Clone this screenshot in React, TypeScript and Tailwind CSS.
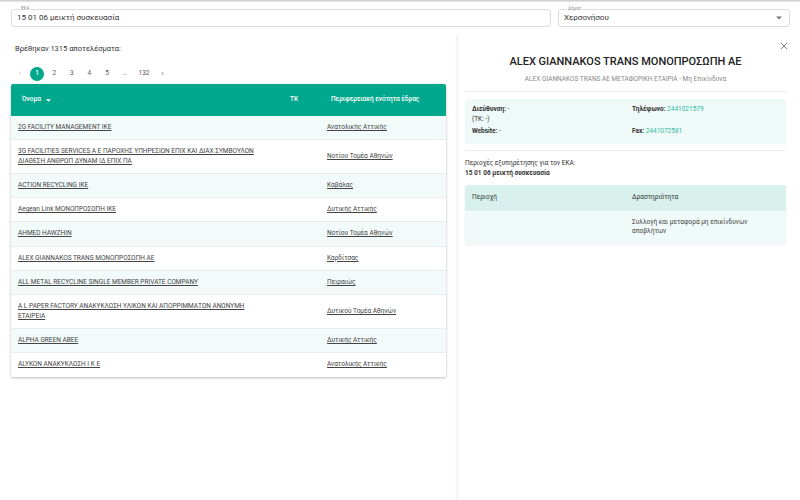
import React from "react";

const rows: { name: string; region: string }[] = [
  { name: "2G FACILITY MANAGEMENT IKE", region: "Ανατολικής Αττικής" },
  {
    name: "3G FACILITIES SERVICES Α Ε ΠΑΡΟΧΗΣ ΥΠΗΡΕΣΙΩΝ ΕΠΙΧ ΚΑΙ ΔΙΑΧ ΣΥΜΒΟΥΛΩΝ ΔΙΑΘΕΣΗ ΑΝΘΡΩΠ ΔΥΝΑΜ ΙΔ ΕΠΙΧ ΠΑ",
    region: "Νοτίου Τομέα Αθηνών",
  },
  { name: "ACTION RECYCLING IKE", region: "Καβάλας" },
  { name: "Aegean Link ΜΟΝΟΠΡΟΣΩΠΗ ΙΚΕ", region: "Δυτικής Αττικής" },
  { name: "AHMED HAWZHIN", region: "Νοτίου Τομέα Αθηνών" },
  { name: "ALEX GIANNAKOS TRANS ΜΟΝΟΠΡΟΣΩΠΗ ΑΕ", region: "Καρδίτσας" },
  { name: "ALL METAL RECYCLINE SINGLE MEMBER PRIVATE COMPANY", region: "Πειραιώς" },
  {
    name: "A L PAPER FACTORY ΑΝΑΚΥΚΛΩΣΗ ΥΛΙΚΩΝ ΚΑΙ ΑΠΟΡΡΙΜΜΑΤΩΝ ΑΝΩΝΥΜΗ ΕΤΑΙΡΕΙΑ",
    region: "Δυτικού Τομέα Αθηνών",
  },
  { name: "ALPHA GREEN ABEE", region: "Δυτικής Αττικής" },
  { name: "ALYKON ΑΝΑΚΥΚΛΩΣΗ Ι Κ Ε", region: "Ανατολικής Αττικής" },
];

export default function App() {
  return (
    <div
      className="w-[800px] h-[500px] bg-white flex flex-col overflow-hidden text-[#333]"
      style={{ fontFamily: "Roboto, 'Noto Sans', sans-serif" }}
    >
      <div className="h-[2px] bg-gradient-to-b from-[#c8c8c8] to-[#ececec]" />
      {/* top inputs */}
      <div className="flex gap-[7px] pl-[11px] pr-[10px] pt-[7px]">
        <div className="relative flex-1 h-[18px] border border-[#dcdcdc] rounded-[3px] flex items-center pl-[5px]">
          <span className="absolute left-[8px] top-[-4px] bg-white px-[1px] text-[4.5px] leading-[6px] text-[#8a8a8a]">
            ΕΚΑ
          </span>
          <span className="text-[8px] text-[#333]">15 01 06 μεικτή συσκευασία</span>
        </div>
        <div className="relative w-[232px] h-[18px] border border-[#dcdcdc] rounded-[3px] flex items-center pl-[5px] pr-[7px]">
          <span className="absolute left-[8px] top-[-4px] bg-white px-[1px] text-[4.5px] leading-[6px] text-[#8a8a8a]">
            Δήμος
          </span>
          <span className="text-[8px] text-[#333] flex-1">Χερσονήσου</span>
          <svg width="6" height="4" viewBox="0 0 10 5">
            <path d="M0 0 L5 5 L10 0 Z" fill="#777" />
          </svg>
        </div>
      </div>

      <div className="flex flex-1 min-h-0">
        {/* left column */}
        <div className="w-[457px] shrink-0 pl-[11px] pr-[11px]">
          <div className="pl-[4px] pt-[17px] text-[7.5px] leading-[10px] text-[#333]">
            Βρέθηκαν 1315 αποτελέσματα:
          </div>
          <div className="flex items-center h-[14px] mt-[13px] pl-[5px] text-[6.5px] text-[#555]">
            <span className="w-[8px] text-[#bbb] text-[7px] text-center">‹</span>
            <span className="ml-[6px] w-[14px] h-[14px] rounded-full bg-[#00a78d] text-white flex items-center justify-center font-medium">
              1
            </span>
            <span className="w-[17.5px] ml-[1.5px] text-center">2</span>
            <span className="w-[17.5px] text-center">3</span>
            <span className="w-[17.5px] text-center">4</span>
            <span className="w-[18px] text-center">5</span>
            <span className="w-[18px] text-center text-[#888]">…</span>
            <span className="w-[20px] text-center">132</span>
            <span className="w-[17px] text-center text-[8px]">›</span>
          </div>
          <div className="mt-[3px] rounded-[2px] shadow-[0_1px_3px_rgba(0,0,0,0.28)] overflow-hidden">
            <table className="w-full table-fixed border-collapse">
              <colgroup>
                <col className="w-[272px]" />
                <col className="w-[37px]" />
                <col />
              </colgroup>
              <thead>
                <tr className="bg-[#00a78d] h-[32px] text-white text-[6.5px] font-medium">
                  <th className="text-left pl-[11px] font-medium">
                    <span className="inline-flex items-center gap-[5px]">
                      Όνομα
                      <svg width="5" height="3" viewBox="0 0 10 5">
                        <path d="M0 0 L5 5 L10 0 Z" fill="#fff" />
                      </svg>
                    </span>
                  </th>
                  <th className="text-left pl-[7px] font-medium">ΤΚ</th>
                  <th className="text-left pl-[11px] font-medium">Περιφερειακή ενότητα έδρας</th>
                </tr>
              </thead>
              <tbody>
                {rows.map((r, i) => (
                  <tr
                    key={i}
                    className={`${i % 2 === 0 ? "bg-[#f3fbfa]" : "bg-white"} border-b border-[#ececec] last:border-b-0 text-[6.5px] leading-[9.3px] text-[#444]`}
                  >
                    <td className="pl-[7px] pr-[20px] py-[7px] align-middle">
                      <span className="underline underline-offset-[1px]">{r.name}</span>
                    </td>
                    <td />
                    <td className="pl-[7px] align-middle">
                      <span className="underline underline-offset-[1px]">{r.region}</span>
                    </td>
                  </tr>
                ))}
              </tbody>
            </table>
          </div>
        </div>

        {/* right panel */}
        <div className="flex-1 mt-[8px] border-l border-[#ededed] shadow-[-1px_0_2px_rgba(0,0,0,0.03)] pl-[7px] pr-[14px] relative">
          <svg
            className="absolute right-[12px] top-[7px]"
            width="8"
            height="8"
            viewBox="0 0 10 10"
          >
            <path d="M1 1 L9 9 M9 1 L1 9" stroke="#777" strokeWidth="1.2" />
          </svg>
          <div className="text-center pt-[20px] text-[11px] leading-[14px] font-medium text-[#222]">
            ALEX GIANNAKOS TRANS ΜΟΝΟΠΡΟΣΩΠΗ ΑΕ
          </div>
          <div className="text-center mt-[6px] text-[6.5px] leading-[8px] text-[#888]">
            ALEX GIANNAKOS TRANS AE ΜΕΤΑΦΟΡΙΚΗ ΕΤΑΙΡΙΑ - Μη Επικίνδυνα
          </div>
          <div className="mt-[8px] h-px bg-[#ececec]" />
          <div className="mt-[7px] bg-[#effaf8] rounded-[3px] grid grid-cols-[160px_1fr] px-[7px] pt-[6px] pb-[7px] text-[6.5px] leading-[9.5px] text-[#333]">
            <div>
              <div>
                <span className="font-bold">Διεύθυνση:</span> -
              </div>
              <div>(ΤΚ: -)</div>
              <div className="mt-[3px]">
                <span className="font-bold">Website:</span> -
              </div>
            </div>
            <div>
              <div>
                <span className="font-bold">Τηλέφωνο:</span>{" "}
                <span className="text-[#2fb9a2]">2441021579</span>
              </div>
              <div className="mt-[12.5px]">
                <span className="font-bold">Fax:</span>{" "}
                <span className="text-[#2fb9a2]">2441072581</span>
              </div>
            </div>
          </div>
          <div className="mt-[6px] h-px bg-[#ececec]" />
          <div className="mt-[7px] text-[6.5px] leading-[10px] text-[#333]">
            <div>Περιοχές εξυπηρέτησης για τον ΕΚΑ:</div>
            <div className="font-bold">15 01 06 μεικτή συσκευασία</div>
          </div>
          <div className="mt-[7px] rounded-[3px] overflow-hidden shadow-[0_1px_2px_rgba(0,0,0,0.08)] text-[6.5px] text-[#333]">
            <div className="grid grid-cols-[160px_1fr] bg-[#d8f1ec] h-[26px] items-center px-[7px]">
              <div>Περιοχή</div>
              <div>Δραστηριότητα</div>
            </div>
            <div className="grid grid-cols-[160px_1fr] bg-[#f0faf8] px-[7px] py-[7px] leading-[9.5px]">
              <div />
              <div className="text-[#444] pr-[24px]">Συλλογή και μεταφορά μη επικίνδυνων αποβλήτων</div>
            </div>
          </div>
        </div>
      </div>
    </div>
  );
}
